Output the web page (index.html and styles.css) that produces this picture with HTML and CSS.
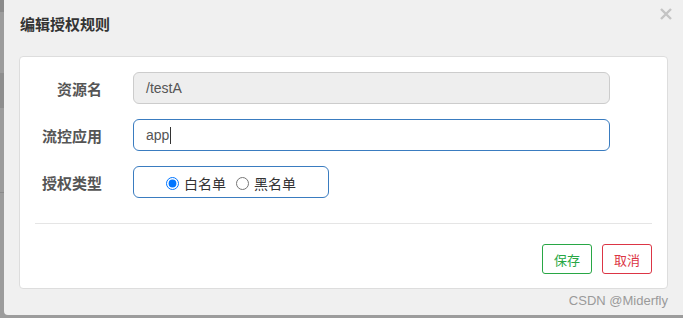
FILE: index.html
```html
<!DOCTYPE html>
<html lang="zh-CN">
<head>
  <meta charset="UTF-8">
  <meta name="viewport" content="width=device-width, initial-scale=1.0">
  <title>编辑授权规则</title>
  <link rel="stylesheet" href="styles.css">
</head>
<body>

  <!-- Dialog -->
  <div class="dialog">
    <div class="dialog-header">
      <h4 class="dialog-title">编辑授权规则</h4>
      <button class="close" type="button" aria-label="Close">
        <svg width="12" height="12" viewBox="0 0 12 12">
          <path d="M1 1 L11 11 M11 1 L1 11" stroke="currentColor" stroke-width="2.4" fill="none"/>
        </svg>
      </button>
    </div>

    <div class="dialog-body">
      <!-- Form -->
      <div class="form-row">
        <label class="form-label">资源名</label>
        <div class="form-control disabled">/testA</div>
      </div>
      <div class="form-row">
        <label class="form-label">流控应用</label>
        <div class="form-control focus">app<span class="caret"></span></div>
      </div>
      <div class="form-row">
        <label class="form-label">授权类型</label>
        <div class="radio-group">
          <label class="radio"><input type="radio" name="strategy" checked> 白名单</label>
          <label class="radio"><input type="radio" name="strategy"> 黑名单</label>
        </div>
      </div>

      <div class="divider"></div>

      <!-- Buttons -->
      <div class="actions">
        <button class="btn btn-save" type="button">保存</button>
        <button class="btn btn-cancel" type="button">取消</button>
      </div>
    </div>

    <div class="watermark">CSDN @Miderfly</div>
  </div>

</body>
</html>
```

FILE: styles.css
```css
html, body {
  height: 100%;
}
body {
  margin: 0;
  padding: 0 0 3px 4px;
  box-sizing: border-box;
  height: 318px;
  overflow: hidden;
  font-family: "Liberation Sans", "Noto Sans CJK SC", sans-serif;
  background: linear-gradient(to bottom,
    #8b8b8b 0, #8b8b8b 12px,
    #9c9c9c 12px, #9c9c9c 73px,
    #8e8e8e 73px, #8e8e8e 108px,
    #9c9c9c 108px, #9c9c9c 192px,
    #8a8a8a 192px, #8a8a8a 193px,
    #9c9c9c 193px);
}
/* Dialog */
.dialog {
  position: relative;
  height: 315px;
  background-color: #f0f0f0;
  border-bottom-left-radius: 4px;
  padding: 0 15px;
  box-sizing: border-box;
}
.dialog-header {
  height: 56px;
}
.dialog-title {
  margin: 0;
  padding-top: 14px;
  padding-left: 1px;
  font-family: "Noto Sans CJK SC", sans-serif;
  font-size: 15px;
  line-height: 20px;
  font-weight: bold;
  color: #333;
}
.close {
  position: absolute;
  top: 8px;
  right: 11px;
  padding: 0;
  border: none;
  background: none;
  color: #c4c4c4;
  line-height: 0;
  cursor: pointer;
}
.dialog-body {
  background-color: #fff;
  border: 1px solid #ddd;
  border-radius: 4px;
  padding: 15px 15px 14px;
}
/* Form */
.form-row {
  display: flex;
  align-items: center;
  gap: 31px;
  margin-bottom: 15px;
}
.form-row:last-of-type {
  margin-bottom: 0;
}
.form-label {
  width: 67px;
  text-align: right;
  font-family: "Noto Sans CJK SC", sans-serif;
  font-size: 15px;
  font-weight: bold;
  color: #555;
}
.form-control {
  width: 477px;
  height: 32px;
  box-sizing: border-box;
  padding: 0 12px;
  border: 1px solid #ccc;
  border-radius: 6px;
  font-size: 14px;
  line-height: 30px;
  color: #555;
}
.form-control.disabled {
  background-color: #eee;
}
.form-control.focus {
  border-color: #3a7cc0;
}
.caret {
  display: inline-block;
  width: 1px;
  height: 17px;
  margin-left: 1px;
  vertical-align: -4px;
  background-color: #333;
}
.radio-group {
  width: 196px;
  height: 32px;
  box-sizing: border-box;
  border: 1px solid #3a7cc0;
  border-radius: 6px;
  display: flex;
  align-items: center;
  justify-content: center;
  gap: 10px;
  padding-top: 2px;
}
.radio {
  display: flex;
  align-items: center;
  gap: 5px;
  font-family: "Noto Sans CJK SC", sans-serif;
  font-size: 14px;
  color: #333;
}
.radio input {
  margin: 0;
  width: 13px;
  height: 13px;
}
.divider {
  height: 1px;
  background-color: #e5e5e5;
  margin-top: 25px;
}
.actions {
  display: flex;
  justify-content: flex-end;
  gap: 10px;
  margin-top: 20px;
}
.btn {
  width: 50px;
  height: 30px;
  padding: 0;
  background-color: #fff;
  border: 1px solid;
  border-radius: 3px;
  font-family: "Noto Sans CJK SC", sans-serif;
  font-size: 13px;
  cursor: pointer;
}
.btn-save {
  color: #28a745;
  border-color: #28a745;
}
.btn-cancel {
  color: #dc3545;
  border-color: #dc3545;
}
/* Watermark */
.watermark {
  text-align: right;
  margin-top: 4px;
  font-size: 13px;
  line-height: 15px;
  color: #9a9a9a;
}
```
